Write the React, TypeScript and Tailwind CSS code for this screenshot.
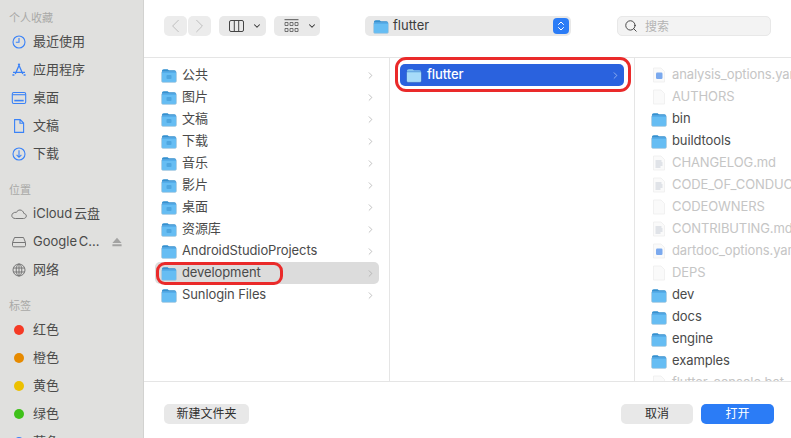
import { ChevronDown, ChevronLeft, ChevronRight, ChevronsUpDown, Search } from "lucide-react";

const FONT = "font-['Inter','Liberation_Sans','Noto_Sans_CJK_SC',sans-serif]";

function Folder({ glyph, selected }: { glyph?: boolean; selected?: boolean }) {
  return (
    <svg width="16" height="15" viewBox="0 0 16 15" className="shrink-0">
      <path d="M1 3.2C1 2 1.7 1.3 2.8 1.3h3.4c.8 0 1.1.7 1.8.9h5.4c1.1 0 1.6.7 1.6 1.8V4H1z" fill={selected ? "#8fcdf3" : "#2f8fd0"} />
      <rect x="0.5" y="3.4" width="15" height="11" rx="1.4" fill={selected ? "#a7dcf9" : "#66bdf3"} stroke={selected ? "#1d4fb5" : "#b9c6d0"} strokeWidth="0.5" />
      <rect x="1" y="3.4" width="14" height="1" fill={selected ? "#6fb7e8" : "#3a9ade"} />
      {glyph && <rect x="5.5" y="7" width="5" height="4" rx="1" fill="#4ea6e0" />}
    </svg>
  );
}

function FileIcon({ kind }: { kind: "blank" | "text" | "dart" }) {
  return (
    <svg width="14" height="16" viewBox="0 0 14 16" className="shrink-0">
      <path d="M1.5 1h7.5l3.5 3.5V15h-11z" fill="#fafafa" stroke="#eeeeee" strokeWidth="0.8" />
      {kind === "text" && <path d="M3.5 6h6M3.5 8h7M3.5 10h7M3.5 12h5" stroke="#c6ccd6" strokeWidth="1" />}
      {kind === "dart" && <rect x="4" y="5.5" width="6.5" height="6.5" rx="1.2" fill="#7ba9ee" />}
    </svg>
  );
}

function SideIcon({ name }: { name: string }) {
  const p = { fill: "none", stroke: "#3a82f7", strokeWidth: 1.1 };
  const g = { fill: "none", stroke: "#777777", strokeWidth: 1 };
  return (
    <svg width="16" height="16" viewBox="0 0 16 16" className="shrink-0">
      {name === "clock" && <><circle cx="8" cy="8" r="6" {...p} /><path d="M8 4v4.3H4.8" {...p} /></>}
      {name === "apps" && <path d="M8.7 1.8 4.3 12M7.3 1.8l4.5 10.2M2 10.3h12M1.4 13h2M12.6 13h2" {...p} strokeWidth={1.3} />}
      {name === "desktop" && <><rect x="1.3" y="2.5" width="13.4" height="11" rx="1.4" {...p} /><rect x="3.3" y="9.8" width="9.4" height="1.6" fill="#3a82f7" /><path d="M1.5 4.7h13" {...p} /></>}
      {name === "doc" && <path d="M3.6 1.6h5.6l3.4 3.4v9.4H3.6zM9 1.8V5.2h3.4" {...p} />}
      {name === "down" && <><circle cx="8" cy="8" r="6" {...p} /><path d="M8 4.3v7M5.6 8.9 8 11.3l2.4-2.4" {...p} /></>}
      {name === "cloud" && <path d="M4.3 12.5h8.2c1.6 0 2.8-1.1 2.8-2.5s-1.1-2.4-2.4-2.5C12.4 5.4 10.8 4 9 4 7.4 4 6.1 4.9 5.5 6.3 3 5.9.8 7.5.8 9.7c0 1.6 1.5 2.8 3.5 2.8z" {...g} />}
      {name === "drive" && <path d="M3.5 3.5h9l2 5v3c0 .8-.5 1.3-1.3 1.3H2.8c-.8 0-1.3-.5-1.3-1.3v-3zM1.6 8.5h12.8" {...g} />}
      {name === "globe" && <><circle cx="8" cy="8" r="6" {...g} /><ellipse cx="8" cy="8" rx="2.8" ry="6" {...g} /><path d="M8 2v12M2.3 6h11.4M2.3 10h11.4" {...g} /></>}
    </svg>
  );
}

function SideHeading({ children }: { children: string }) {
  return <div className="h-[19px] flex items-center pl-[9px] text-[11px] text-[#a9a9a7]">{children}</div>;
}

function SideItem({ icon, label, eject }: { icon: string; label: string; eject?: boolean }) {
  return (
    <div className="h-7 flex items-center pl-[11px] pr-[21px] gap-[6px] text-[13px] text-[#4b4b4a] whitespace-nowrap [word-spacing:-2px]">
      <SideIcon name={icon} />
      <span className="flex-1">{label}</span>
      {eject && (
        <svg width="10" height="10" viewBox="0 0 10 10">
          <path d="M5 .8 9.6 6H.4zM.4 7.3h9.2v1.9H.4z" fill="#a3a3a2" />
        </svg>
      )}
    </div>
  );
}

function TagItem({ color, label }: { color: string; label: string }) {
  return (
    <div className="h-7 flex items-center pl-[14px] gap-[9px] text-[13px] text-[#4b4b4a]">
      <span className={`w-[10px] h-[10px] rounded-full ${color}`} />
      <span>{label}</span>
    </div>
  );
}

function Sidebar() {
  return (
    <aside className="w-[144px] h-[438px] shrink-0 overflow-hidden bg-[#e0e0de] border-r border-[#d2d2d0] pt-[9px]">
      <SideHeading>个人收藏</SideHeading>
      <SideItem icon="clock" label="最近使用" />
      <SideItem icon="apps" label="应用程序" />
      <SideItem icon="desktop" label="桌面" />
      <SideItem icon="doc" label="文稿" />
      <SideItem icon="down" label="下载" />
      <div className="h-[13px]" />
      <SideHeading>位置</SideHeading>
      <SideItem icon="cloud" label="iCloud 云盘" />
      <SideItem icon="drive" label="Google C..." eject />
      <SideItem icon="globe" label="网络" />
      <div className="h-[13px]" />
      <SideHeading>标签</SideHeading>
      <TagItem color="bg-[#f53a25]" label="红色" />
      <TagItem color="bg-[#e68a00]" label="橙色" />
      <TagItem color="bg-[#ecc000]" label="黄色" />
      <TagItem color="bg-[#3fc11a]" label="绿色" />
      <TagItem color="bg-[#3a82f7]" label="蓝色" />
    </aside>
  );
}

function Toolbar() {
  return (
    <div className="h-[58px] shrink-0 flex items-start pt-4 border-b border-[#e5e5e5] bg-white">
      <div className="ml-5 flex gap-px">
        <div className="w-[23px] h-5 rounded-[5px] bg-[#ececec] flex items-center justify-center">
          <ChevronLeft size={24} strokeWidth={0.8} className="text-[#b0b0b0]" />
        </div>
        <div className="w-[23px] h-5 rounded-[5px] bg-[#ececec] flex items-center justify-center">
          <ChevronRight size={24} strokeWidth={0.8} className="text-[#b0b0b0]" />
        </div>
      </div>
      <div className="ml-2 w-[47px] h-5 rounded-[5px] bg-[#e9e9e9] flex items-center pl-[10px] gap-2">
        <svg width="15" height="12" viewBox="0 0 15 12" className="shrink-0">
          <rect x="0.5" y="0.5" width="14" height="11" rx="1.5" fill="none" stroke="#444" />
          <path d="M5.3 1v10M9.7 1v10" stroke="#444" />
        </svg>
        <ChevronDown size={10} strokeWidth={2.5} className="text-[#333]" />
      </div>
      <div className="ml-2 w-[46px] h-5 rounded-[5px] bg-[#e9e9e9] flex items-center pl-[10px] gap-2">
        <svg width="15" height="14" viewBox="0 0 15 14" className="shrink-0">
          <path d="M0.5 .7h14" stroke="#555" />
          <path d="M1 3.5h3v3H1zM6 3.5h3v3H6zM11 3.5h3v3h-3zM1 9.5h3v3H1zM6 9.5h3v3H6zM11 9.5h3v3h-3z" fill="none" stroke="#555" strokeWidth="0.8" />
        </svg>
        <ChevronDown size={10} strokeWidth={2.5} className="text-[#333]" />
      </div>
      <div className="ml-[45px] w-[206px] h-5 rounded-[5px] bg-[#e8e8e8] flex items-center pl-2 pr-[2px] gap-1">
        <Folder />
        <span className="flex-1 text-[13px] text-[#3c3c3c]">flutter</span>
        <div className="w-4 h-4 rounded-[4px] bg-[#2b7cf6] flex items-center justify-center">
          <ChevronsUpDown size={12} strokeWidth={2} className="text-white" />
        </div>
      </div>
      <div className="ml-[46px] w-[154px] h-5 rounded-[5px] bg-[#f3f3f3] border border-[#e8e8e8] flex items-center pl-1.5 gap-[7px]">
        <Search size={14} strokeWidth={1.5} className="text-[#333]" />
        <span className="text-xs text-[#b4b4b4] pt-px">搜索</span>
      </div>
    </div>
  );
}

function Row({ label, glyph, state }: { label: string; glyph?: boolean; state?: "active" | "muted" }) {
  const bg = state === "active" ? "ml-[10px] bg-[#2a62de] text-white font-medium" : state === "muted" ? "ml-[11px] bg-[#dcdcdc] text-[#4a4a4a]" : "ml-[11px] text-[#4a4a4a]";
  return (
    <div className={`h-[22px] mr-[10px] pl-[6px] pr-[3px] rounded-[5px] flex items-center gap-[5px] text-[13px] tracking-[-0.1px] ${bg}`}>
      <Folder glyph={glyph} selected={state === "active"} />
      <span className="flex-1 whitespace-nowrap">{label}</span>
      <ChevronRight size={11} strokeWidth={1.5} className={state === "active" ? "text-[#b9cdf5]" : "text-[#a5a5a5]"} />
    </div>
  );
}

function FileRow({ label, kind }: { label: string; kind?: "blank" | "text" | "dart" }) {
  return (
    <div className={`h-[22px] pl-4 flex items-center gap-[5px] text-[13px] tracking-[-0.1px] whitespace-nowrap ${kind ? "text-[#c5c5c5]" : "text-[#4a4a4a]"}`}>
      <span className="w-4 flex justify-center shrink-0">{kind ? <FileIcon kind={kind} /> : <Folder />}</span>
      <span>{label}</span>
    </div>
  );
}

const places = ["公共", "图片", "文稿", "下载", "音乐", "影片", "桌面", "资源库", "AndroidStudioProjects"];

const files: { label: string; kind?: "blank" | "text" | "dart" }[] = [
  { label: "analysis_options.yaml", kind: "dart" },
  { label: "AUTHORS", kind: "blank" },
  { label: "bin" },
  { label: "buildtools" },
  { label: "CHANGELOG.md", kind: "text" },
  { label: "CODE_OF_CONDUCT.md", kind: "text" },
  { label: "CODEOWNERS", kind: "blank" },
  { label: "CONTRIBUTING.md", kind: "text" },
  { label: "dartdoc_options.yaml", kind: "dart" },
  { label: "DEPS", kind: "blank" },
  { label: "dev" },
  { label: "docs" },
  { label: "engine" },
  { label: "examples" },
  { label: "flutter_console.bat", kind: "blank" },
];

export default function App() {
  return (
    <div className={`relative w-[791px] h-[438px] overflow-hidden flex bg-white ${FONT}`}>
      <Sidebar />
      <main className="flex-1 min-w-0 flex flex-col">
        <Toolbar />
        <div className="flex-1 min-h-0 flex overflow-hidden">
          <div className="w-[246px] shrink-0 pt-[6px] border-r border-[#e5e5e5]">
            {places.map((name, i) => (
              <Row key={name} label={name} glyph={i < 8} />
            ))}
            <Row label="development" state="muted" />
            <Row label="Sunlogin Files" />
          </div>
          <div className="w-[245px] shrink-0 pt-[6px] border-r border-[#e5e5e5]">
            <Row label="flutter" state="active" />
          </div>
          <div className="flex-1 min-w-0 pt-[6px] overflow-hidden">
            {files.map((f) => (
              <FileRow key={f.label} label={f.label} kind={f.kind} />
            ))}
          </div>
        </div>
        <div className="h-[57px] shrink-0 border-t border-[#e5e5e5] flex items-start justify-between pt-[22px] pl-5 pr-[17px] bg-white">
          <button className="h-5 w-[85px] rounded-[5px] bg-[#e8e8e8] text-xs text-[#2f2f2f]">新建文件夹</button>
          <div className="flex gap-2">
            <button className="h-5 w-[72px] rounded-[5px] bg-[#e8e8e8] text-xs text-[#2f2f2f]">取消</button>
            <button className="h-5 w-[73px] rounded-[5px] bg-[#2b7cf6] text-xs text-white">打开</button>
          </div>
        </div>
      </main>
      {/* red annotations drawn over the screenshot */}
      <div className="absolute left-[395px] top-[57px] w-[236px] h-[35px] rounded-[11px] border-[3px] border-[#ea2a2a]" />
      <div className="absolute left-[156px] top-[262px] w-[127px] h-[23px] rounded-[9px] border-[3px] border-[#ea2a2a]" />
    </div>
  );
}
